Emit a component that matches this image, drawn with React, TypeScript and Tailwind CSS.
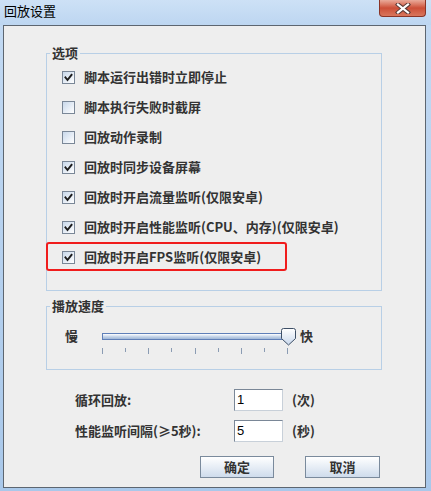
import React from "react";

const CheckBox = ({ checked }: { checked: boolean }) => (
  <div className="w-[13px] h-[13px] border border-[#7a8797] bg-linear-to-br from-[#c9d8ea] to-white flex items-center justify-center shrink-0">
    {checked && (
      <svg width="11" height="11" viewBox="0 0 11 11">
        <path d="M2.5 5.5 L4.5 8 L8.5 3" stroke="#1e1e1e" strokeWidth="2" fill="none" strokeLinecap="square" />
      </svg>
    )}
  </div>
);

const options: { label: string; checked: boolean }[] = [
  { label: "脚本运行出错时立即停止", checked: true },
  { label: "脚本执行失败时截屏", checked: false },
  { label: "回放动作录制", checked: false },
  { label: "回放时同步设备屏幕", checked: true },
  { label: "回放时开启流量监听(仅限安卓)", checked: true },
  { label: "回放时开启性能监听(CPU、内存)(仅限安卓)", checked: true },
  { label: "回放时开启FPS监听(仅限安卓)", checked: true },
];

const ticks = [0, 1, 2, 3, 4, 5, 6, 7, 8];

export default function App() {
  return (
    <div className="w-[431px] h-[491px] flex flex-col bg-linear-to-b from-[#c3daf3] to-[#a9c8ea] font-['Noto_Sans_CJK_SC',sans-serif] text-[#333333] overflow-hidden">
      {/* title bar */}
      <div className="h-[25px] flex items-start justify-between bg-linear-to-b from-[#cde1f6] to-[#bdd6f1]">
        <div className="pl-[4px] pt-[2px] text-[13px] leading-[18px] text-black">回放设置</div>
        <div className="mr-[5px] w-[47px] h-[17px] rounded-b-[4px] border border-t-0 border-[#8a3426] bg-linear-to-b from-[#e9aa9a] via-[#cc4e37] to-[#d9765c] flex items-center justify-center">
          <svg width="16" height="11" viewBox="0 0 16 11">
            <path d="M3 1.5 L13 9.5 M13 1.5 L3 9.5" stroke="#5b3a36" strokeWidth="4.2" strokeLinecap="square" />
            <path d="M3 1.5 L13 9.5 M13 1.5 L3 9.5" stroke="#ffffff" strokeWidth="2.2" strokeLinecap="square" />
          </svg>
        </div>
      </div>
      {/* content panel */}
      <div className="ml-[3px] mr-[5px] h-[463px] border border-[#5d6670] bg-[#eeeeee] flex flex-col">
        <fieldset className="ml-[42px] mt-[20px] w-[336px] border border-[#b8cfe6] relative">
          <legend className="ml-[3px] px-[2px] text-[13px] leading-[14px] font-bold">选项</legend>
          <div className="pt-[2px] pb-[18px] pl-[15px] flex flex-col">
            {options.map((o, i) => (
              <div key={i} className="h-[30px] flex items-center gap-[9px] relative">
                <CheckBox checked={o.checked} />
                <span className="text-[13px] font-bold leading-[16px] whitespace-nowrap">{o.label}</span>
                {i === 6 && (
                  <div className="absolute left-[-16px] top-0 w-[241px] h-[29px] border-2 border-[#f01c1c] rounded-[3px]" />
                )}
              </div>
            ))}
          </div>
        </fieldset>

        <fieldset className="ml-[42px] mt-[8px] w-[336px] border border-[#b8cfe6]">
          <legend className="ml-[3px] px-[2px] text-[13px] leading-[14px] font-bold">播放速度</legend>
          <div className="pt-[15px] pb-[14px] pl-[18px] flex items-start">
            <span className="text-[13px] font-bold leading-[16px]">慢</span>
            <div className="ml-[24px] relative w-[194px] h-[27px]">
              <div className="absolute left-0 top-[5px] w-[191px] h-[7px] border border-[#5f7fb8] bg-linear-to-b from-white via-[#c7d6ea] to-[#9fb6d6]" />
              {ticks.map((t) => (
                <div
                  key={t}
                  className={`absolute top-[20px] w-px bg-[#8b9cb3] ${t % 2 === 0 ? "h-[6px]" : "h-[4px]"}`}
                  style={{ left: Math.round(t * 23.125) }}
                />
              ))}
              <svg className="absolute left-[179px] top-0" width="15" height="18" viewBox="0 0 15 18">
                <defs>
                  <linearGradient id="th" x1="0" y1="0" x2="0" y2="1">
                    <stop offset="0" stopColor="#ffffff" />
                    <stop offset="1" stopColor="#c9d8ec" />
                  </linearGradient>
                </defs>
                <path d="M0.5 2.5 Q0.5 0.5 2.5 0.5 L12.5 0.5 Q14.5 0.5 14.5 2.5 L14.5 10.5 L7.5 17 L0.5 10.5 Z" fill="url(#th)" stroke="#3d4f66" strokeWidth="1" />
              </svg>
            </div>
            <span className="ml-[4px] text-[13px] font-bold leading-[16px]">快</span>
          </div>
        </fieldset>

        <div className="mt-[19px] ml-[71px] flex flex-col gap-[9px]">
          <div className="flex items-center h-[22px]">
            <span className="w-[159px] text-[13px] font-bold leading-[16px]">循环回放:</span>
            <div className="w-[49px] h-[22px] border border-[#7a8797] border-r-[#c8d0d9] border-b-[#c8d0d9] bg-white pl-[2px] text-[13px] leading-[20px] font-['Liberation_Sans',sans-serif] text-black">1</div>
            <span className="ml-[9px] text-[13px] font-bold leading-[16px]">(次)</span>
          </div>
          <div className="flex items-center h-[22px]">
            <span className="w-[159px] text-[13px] font-bold leading-[16px] whitespace-nowrap">性能监听间隔(≥5秒):</span>
            <div className="w-[49px] h-[22px] border border-[#7a8797] border-r-[#c8d0d9] border-b-[#c8d0d9] bg-white pl-[2px] text-[13px] leading-[20px] font-['Liberation_Sans',sans-serif] text-black">5</div>
            <span className="ml-[9px] text-[13px] font-bold leading-[16px]">(秒)</span>
          </div>
        </div>

        <div className="mt-[14px] ml-[196px] flex gap-[31px]">
          <button className="w-[74px] h-[22px] border border-[#7a8a9c] bg-linear-to-b from-white to-[#cfdcec] text-[13px] font-bold leading-[16px] text-[#333333]">确定</button>
          <button className="w-[75px] h-[22px] border border-[#7a8a9c] bg-linear-to-b from-white to-[#cfdcec] text-[13px] font-bold leading-[16px] text-[#333333]">取消</button>
        </div>
      </div>
    </div>
  );
}
